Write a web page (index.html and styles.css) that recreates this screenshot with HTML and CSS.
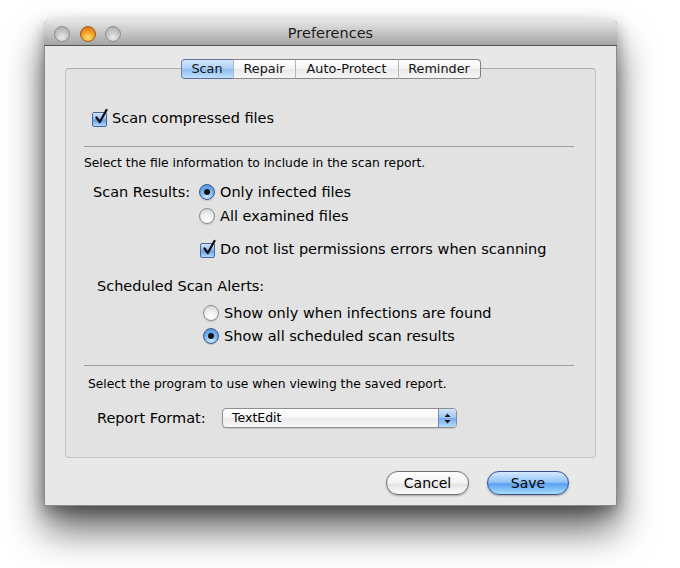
FILE: index.html
```html
<!DOCTYPE html>
<html>
<head>
<meta charset="utf-8">
<title>Preferences</title>
<link rel="stylesheet" href="styles.css">
</head>
<body>
<div class="stage">
  <div class="window">
    <div class="titlebar">
      <div class="lights">
        <span class="light gray"></span>
        <span class="light orange"></span>
        <span class="light gray"></span>
      </div>
      <div class="title">Preferences</div>
      <div></div>
    </div>
    <div class="content">
      <div class="tabs">
        <span class="tab sel w1">Scan</span>
        <span class="tab w2">Repair</span>
        <span class="tab w3">Auto-Protect</span>
        <span class="tab w4">Reminder</span>
      </div>
      <div class="box">
        <div class="row r1">
          <span class="check"><svg class="mark" width="16" height="18" viewBox="0 0 16 18"><path d="M3.5 9.5 L6.8 14 L13.5 2" fill="none" stroke="#111" stroke-width="2.3" stroke-linecap="round" stroke-linejoin="round"/></svg></span>
          <span class="lbl">Scan compressed files</span>
        </div>
        <div class="hr hr1"></div>
        <div class="small s1">Select the file information to include in the scan report.</div>
        <div class="row r2">
          <span class="label l1">Scan Results:</span>
          <span class="radio on"></span>
          <span class="lbl">Only infected files</span>
        </div>
        <div class="row r3">
          <span class="radio"></span>
          <span class="lbl">All examined files</span>
        </div>
        <div class="row r4">
          <span class="check"><svg class="mark" width="16" height="18" viewBox="0 0 16 18"><path d="M3.5 9.5 L6.8 14 L13.5 2" fill="none" stroke="#111" stroke-width="2.3" stroke-linecap="round" stroke-linejoin="round"/></svg></span>
          <span class="lbl">Do not list permissions errors when scanning</span>
        </div>
        <div class="row r5">
          <span class="label">Scheduled Scan Alerts:</span>
        </div>
        <div class="row r6">
          <span class="radio"></span>
          <span class="lbl">Show only when infections are found</span>
        </div>
        <div class="row r7">
          <span class="radio on"></span>
          <span class="lbl">Show all scheduled scan results</span>
        </div>
        <div class="hr hr2"></div>
        <div class="small s2">Select the program to use when viewing the saved report.</div>
        <div class="row r8">
          <span class="label l2">Report Format:</span>
          <div class="popup">
            <span class="popup-text">TextEdit</span>
            <span class="popup-arrows">
              <svg width="7" height="11" viewBox="0 0 7 11"><path d="M3.5 0.5 L6.5 4 L0.5 4 Z M3.5 10.5 L6.5 7 L0.5 7 Z" fill="#111"/></svg>
            </span>
          </div>
        </div>
      </div>
      <div class="buttons">
        <span class="btn cancel">Cancel</span>
        <span class="btn save">Save</span>
      </div>
    </div>
  </div>
</div>
</body>
</html>
```

FILE: styles.css
```css
html, body {
  margin: 0;
  padding: 0;
  background: #ffffff;
}
body {
  font-family: "DejaVu Sans", "Liberation Sans", sans-serif;
  font-size: 14.5px;
  color: #000;
}
.stage {
  padding: 20px 0 0 44px;
  height: 568px;
  box-sizing: border-box;
}
.window {
  width: 573px;
  height: 486px;
  box-sizing: border-box;
  background: #e8e8e8;
  border-radius: 5px 5px 0 0;
  border: 1px solid #8a8a8a;
  border-top: none;
  box-shadow: 0 24px 38px rgba(0,0,0,0.6), 0 6px 16px rgba(0,0,0,0.35);
}
.titlebar {
  height: 25px;
  border-bottom: 1px solid #555;
  border-radius: 5px 5px 0 0;
  background: linear-gradient(#e6e6e6, #cdcdcd 40%, #a4a4a4);
  display: grid;
  grid-template-columns: 1fr auto 1fr;
  align-items: center;
  margin: 0 -1px;
}
.lights {
  display: flex;
  gap: 9.5px;
  padding-left: 10px;
  padding-top: 2px;
}
.light {
  width: 14px;
  height: 14px;
  border-radius: 50%;
  border: 1px solid #8d8d8d;
}
.light.gray {
  background: radial-gradient(circle at 50% 75%, #ececec 0, #c9c9c9 45%, #a5a5a5 100%);
}
.light.orange {
  border-color: #a55a14;
  background: radial-gradient(circle at 50% 78%, #ffe27a 0, #f6a42a 45%, #cc5f0c 100%);
}
.title {
  font-size: 14.5px;
  color: #1a1a1a;
  padding-top: 1px;
}
.content {
  padding: 13px 20px 0 20px;
}
.tabs {
  display: flex;
  justify-content: center;
  margin-bottom: -11px;
  position: relative;
  z-index: 1;
}
.tab {
  height: 18px;
  line-height: 18px;
  font-size: 12.8px;
  text-align: center;
  border-top: 1px solid #7f7f7f;
  border-bottom: 1px solid #8a8a8a;
  border-left: 1px solid #b4b4b4;
  background: linear-gradient(#ffffff, #f4f4f4 50%, #e9e9e9 50%, #f5f5f5);
  color: #111;
}
.tab:first-child {
  border-left: 1px solid #6c7fa6;
  border-radius: 4px 0 0 4px;
}
.tab:last-child {
  border-right: 1px solid #7f7f7f;
  border-radius: 0 4px 4px 0;
}
.tab.sel {
  background: linear-gradient(#d6e8fb, #a9cdf6 50%, #8dbcf2 50%, #c2e0fc);
  border-top-color: #5c6f98;
  border-bottom-color: #5c6f98;
}
.w1 { width: 51px; }
.w2 { width: 61px; }
.w3 { width: 102px; }
.w4 { width: 81px; }
.box {
  height: 390px;
  box-sizing: border-box;
  background: #e2e2e2;
  border: 1px solid #c3c3c3;
  border-top-color: #adadad;
  border-radius: 4px;
  padding-top: 39px;
}
.row {
  height: 20px;
  display: flex;
  align-items: center;
}
.r1 { padding-left: 26px; }
.r2 { margin-top: 12px; padding-left: 27px; }
.r3 { margin-top: 4px; padding-left: 133px; }
.r4 { margin-top: 13px; padding-left: 134px; }
.r5 { margin-top: 17px; padding-left: 31px; }
.r6 { margin-top: 7px; padding-left: 137px; }
.r7 { margin-top: 3px; padding-left: 137px; }
.r8 { margin-top: 17px; padding-left: 31px; }
.l1 { width: 106px; }
.l2 { width: 125px; }
.lbl { margin-left: 5px; }
.hr {
  height: 1px;
  background: #9c9c9c;
  margin-left: 18px;
  width: 490px;
}
.hr1 { margin-top: 18px; }
.hr2 { margin-top: 19px; }
.small {
  font-size: 12.3px;
  height: 14px;
  line-height: 14px;
}
.s1 { margin-top: 9px; padding-left: 18px; }
.s2 { margin-top: 11px; padding-left: 22px; }
.check {
  width: 13px;
  height: 13px;
  border: 1px solid #4a679c;
  border-radius: 2px;
  background: linear-gradient(#d3e6fa, #8dbdf1 48%, #5f9ee8 52%, #b0d8fc);
  position: relative;
  margin-top: 2px;
  flex: none;
}
.mark {
  position: absolute;
  left: 0;
  top: -5px;
}
.radio {
  width: 14px;
  height: 14px;
  border-radius: 50%;
  border: 1px solid #8c8c8c;
  background: radial-gradient(circle at 50% 80%, #ffffff 0, #f2f2f2 40%, #cfcfcf 100%);
  display: flex;
  align-items: center;
  justify-content: center;
  flex: none;
  box-shadow: 0 1px 1px rgba(0,0,0,0.15);
}
.radio.on {
  border-color: #3e5a8e;
  background: radial-gradient(circle at 50% 80%, #cdeaff 0, #7fb8f2 45%, #3f86dc 100%);
}
.radio.on::after {
  content: "";
  width: 6px;
  height: 6px;
  border-radius: 50%;
  background: #111;
}
.popup {
  width: 235px;
  height: 20px;
  box-sizing: border-box;
  border: 1px solid #8e8e8e;
  border-radius: 4px;
  background: linear-gradient(#ffffff, #f6f6f6 50%, #eaeaea 50%, #f8f8f8);
  display: flex;
  overflow: hidden;
  box-shadow: 0 1px 1px rgba(0,0,0,0.12);
}
.popup-text {
  flex: 1;
  font-size: 12.5px;
  line-height: 18px;
  padding-left: 9px;
}
.popup-arrows {
  width: 17px;
  border-left: 1px solid #6f86b3;
  background: linear-gradient(#d2e6fb, #9cc6f4 50%, #6fa9ee 50%, #b9dcfc);
  display: flex;
  align-items: center;
  justify-content: center;
}
.buttons {
  display: flex;
  justify-content: flex-end;
  gap: 18px;
  margin-top: 13px;
  padding-right: 27px;
}
.btn {
  height: 22px;
  line-height: 22px;
  border-radius: 12px;
  text-align: center;
  font-size: 14px;
  box-shadow: 0 1px 2px rgba(0,0,0,0.3);
}
.cancel {
  width: 81px;
  border: 1px solid #6f6f6f;
  background: linear-gradient(#ffffff, #f3f3f3 50%, #e4e4e4 55%, #fafafa);
}
.save {
  width: 80px;
  border: 1px solid #3c4d90;
  background: linear-gradient(#d5e9fd, #94c5f7 45%, #5aa3ef 55%, #a8dcfd);
}
```
